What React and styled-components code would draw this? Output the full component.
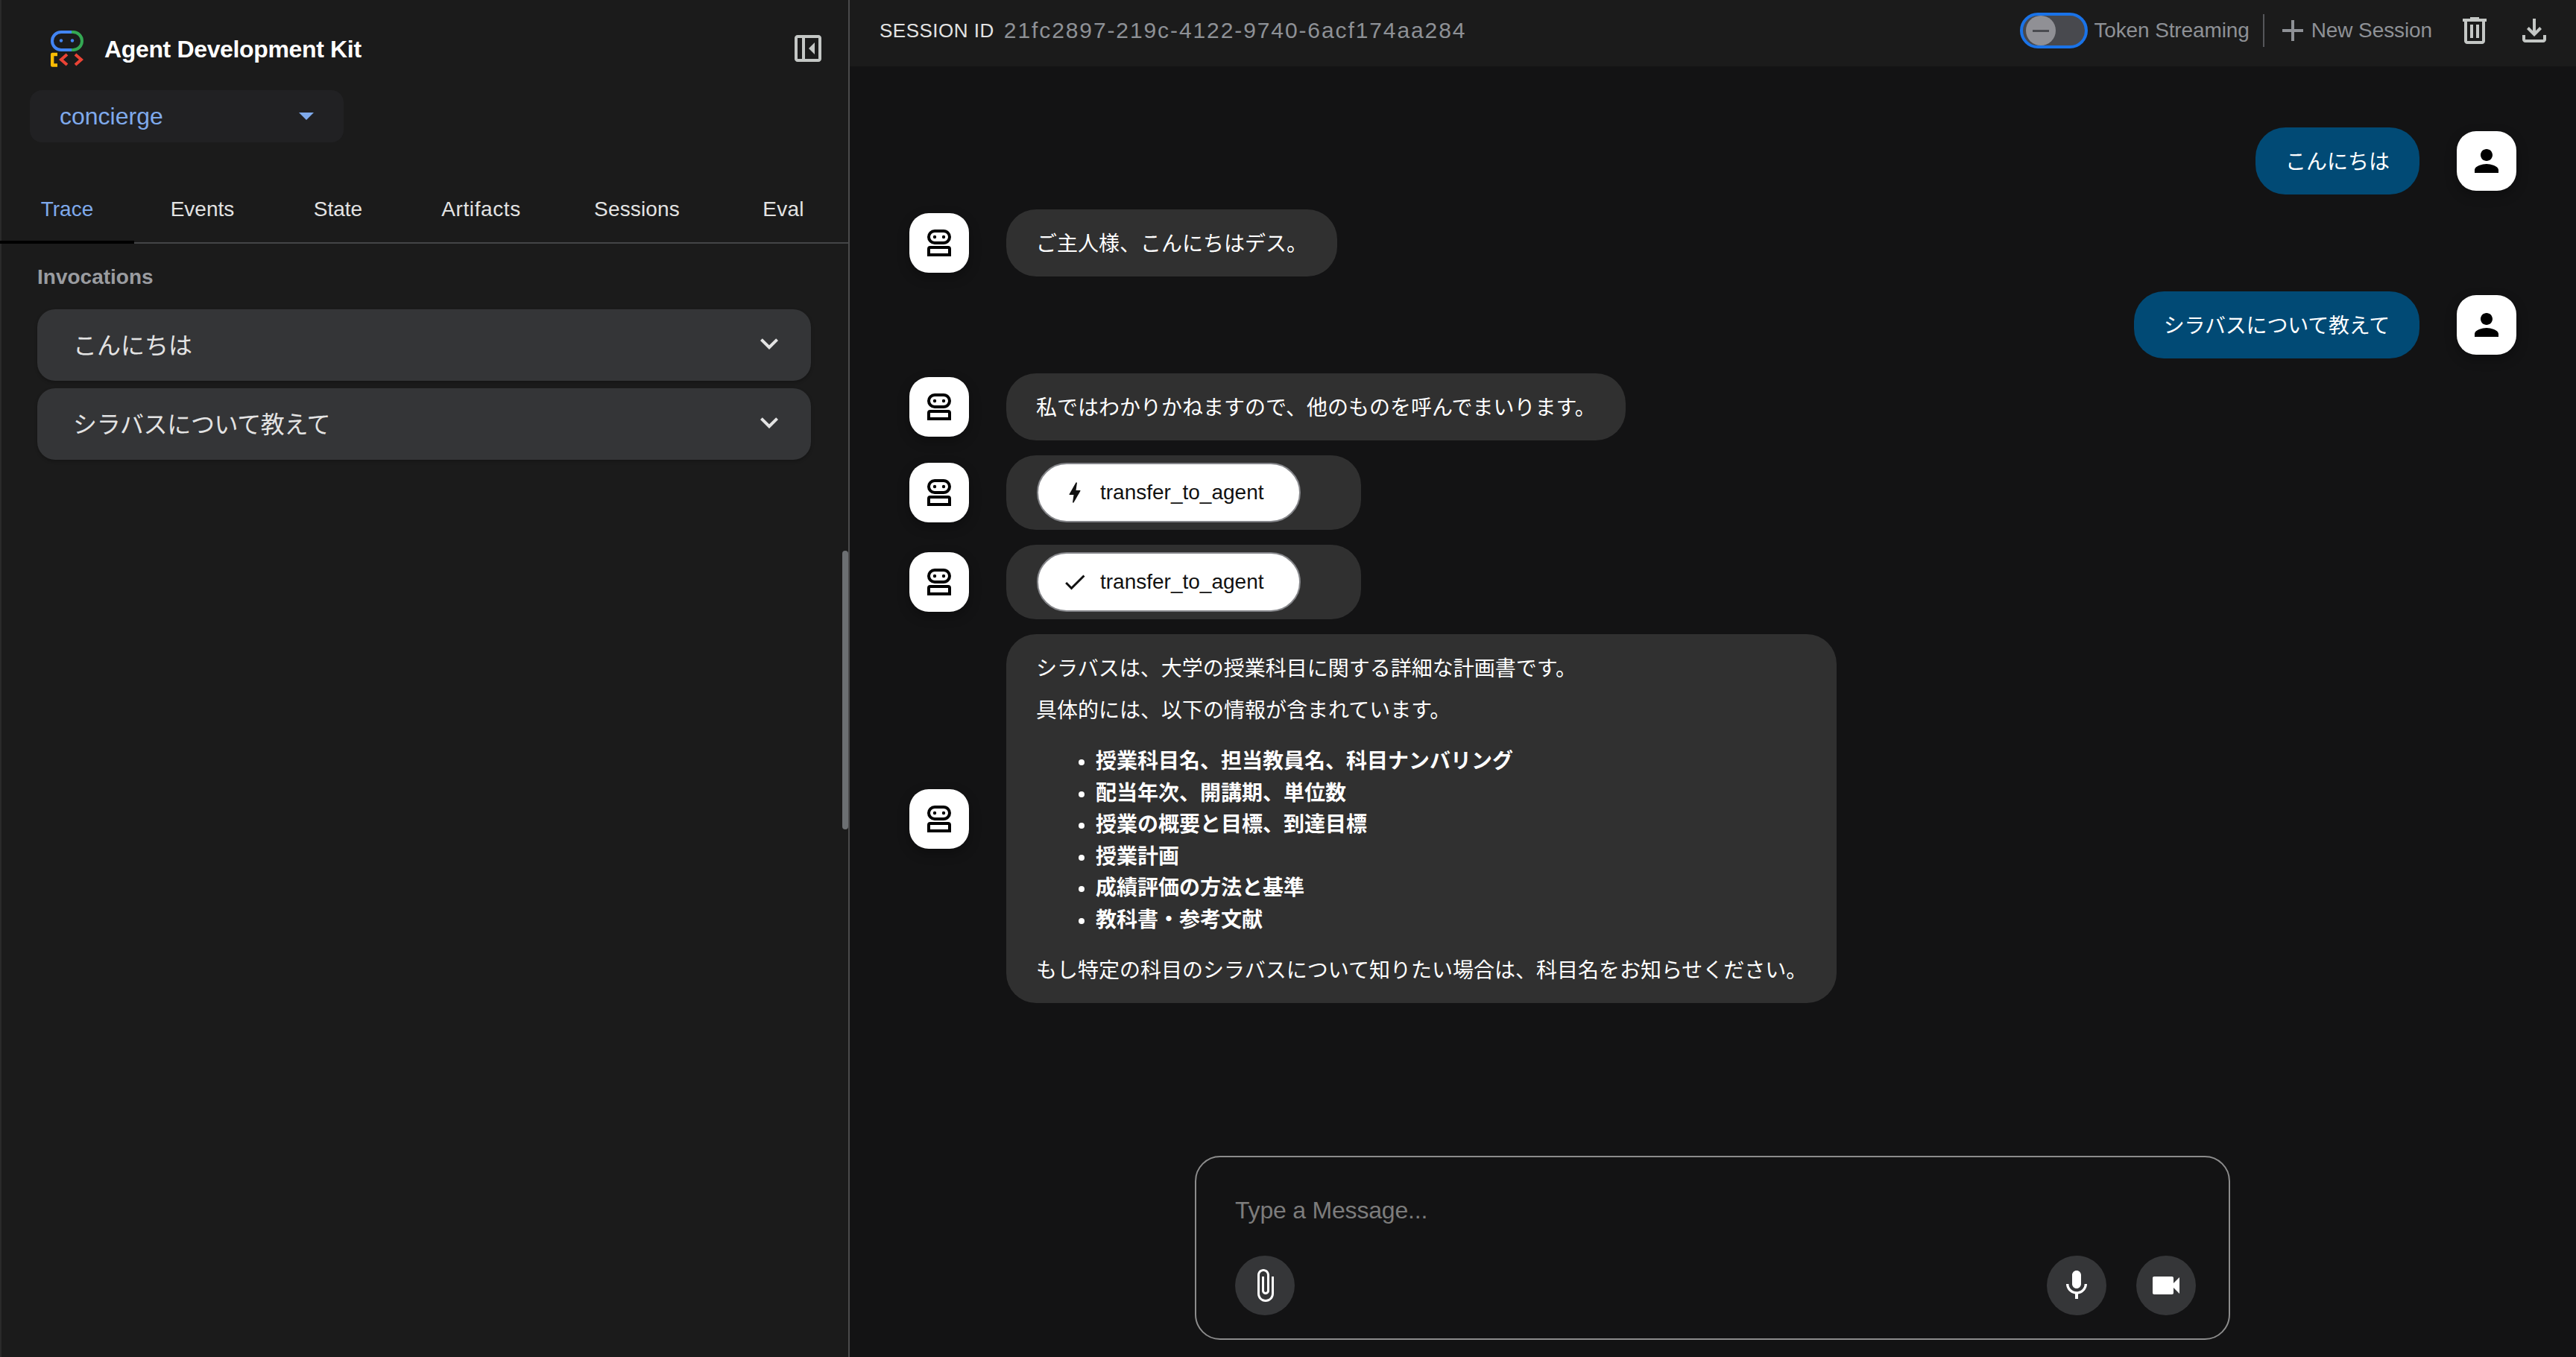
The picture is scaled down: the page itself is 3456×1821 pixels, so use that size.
import React from "react";
import styled, { createGlobalStyle } from "styled-components";

const Global = createGlobalStyle`
  html, body { margin: 0; padding: 0; background: #131314; }
  body { font-family: "Liberation Sans", "Noto Sans CJK JP", sans-serif; }
  #root { width: 3456px; height: 1821px; overflow: hidden; }
  * { box-sizing: border-box; }
`;

const Page = styled.div`
  display: flex;
  width: 3456px;
  height: 1821px;
  background: #131314;
  color: #fff;
`;

/* ---------- side panel ---------- */
const Side = styled.aside`
  position: relative;
  flex: none;
  width: 1140px;
  height: 100%;
  background: #1b1b1b;
  border-left: 2px solid #2a2a2a;
  border-right: 2px solid #4a4a4b;
  display: flex;
  flex-direction: column;
`;
const Brand = styled.div`
  height: 121px;
  padding: 41px 30px 0 66px;
  display: flex;
  align-items: flex-start;
  justify-content: space-between;
`;
const BrandLeft = styled.div`
  display: flex;
  align-items: center;
  gap: 28px;
`;
const Title = styled.div`
  font-size: 32px;
  font-weight: 700;
  line-height: 48px;
  color: #fff;
  letter-spacing: -0.35px;
`;
const PanelIconSlot = styled.div`
  color: #c4c7c5;
  width: 48px;
  height: 48px;
`;
const AgentSelect = styled.div`
  width: 421px;
  height: 70px;
  margin-left: 38px;
  padding: 0 40px;
  border-radius: 16px;
  background: #212123;
  display: flex;
  align-items: center;
  justify-content: space-between;
  font-size: 32px;
  color: #7faaec;
`;
const SelectArrow = styled.span`
  width: 0;
  height: 0;
  border-left: 10px solid transparent;
  border-right: 10px solid transparent;
  border-top: 10px solid #7faaec;
`;
const Tabs = styled.div`
  margin-top: 60px;
  height: 76px;
  display: flex;
  border-bottom: 2px solid #444547;
`;
const Tab = styled.div`
  position: relative;
  flex: none;
  height: 76px;
  width: ${(p) => p.$w}px;
  display: flex;
  align-items: center;
  justify-content: center;
  padding-bottom: 16px;
  font-size: 28px;
  letter-spacing: ${(p) => p.$ls || 0}px;
  color: ${(p) => (p.$active ? "#7faaec" : "#e3e3e3")};
  ${(p) =>
    p.$active &&
    `&::after { content: ""; position: absolute; left: -2px; right: -2px; bottom: 0; height: 4px; background: #000; }`}
`;
const SectionLabel = styled.div`
  margin: 28px 0 0 48px;
  font-size: 28px;
  line-height: 34px;
  font-weight: 700;
  color: #9a9ca0;
`;
const Invocations = styled.div`
  margin: 26px 50px 0 48px;
  display: flex;
  flex-direction: column;
  gap: 10px;
`;
const Invocation = styled.div`
  height: 96px;
  padding: 0 32px 4px 48px;
  border-radius: 24px;
  background: #343537;
  display: flex;
  align-items: center;
  justify-content: space-between;
  font-size: 32px;
  letter-spacing: ${(p) => p.$ls || 0}px;
  color: #e3e3e3;
  box-shadow: 0 2px 4px rgba(0, 0, 0, 0.25);
`;
const ChevronSlot = styled.span`
  width: 48px;
  height: 48px;
  color: #e3e3e3;
`;
const Thumb = styled.div`
  position: absolute;
  right: 0;
  top: 739px;
  width: 8px;
  height: 374px;
  border-radius: 4px;
  background: #6c6f72;
`;

/* ---------- main ---------- */
const Main = styled.main`
  flex: 1;
  min-width: 0;
  display: flex;
  flex-direction: column;
`;
const TopBar = styled.header`
  flex: none;
  height: 89px;
  padding: 0 32px 7px 40px;
  background: #1b1b1b;
  display: flex;
  align-items: center;
  justify-content: space-between;
`;
const SessionWrap = styled.div`
  display: flex;
  align-items: center;
  gap: 13px;
`;
const SessionKey = styled.span`
  font-size: 26px;
  letter-spacing: 0.5px;
  color: #e3e3e3;
`;
const SessionValue = styled.span`
  font-size: 30px;
  letter-spacing: 1.9px;
  color: #8e9196;
`;
const Actions = styled.div`
  display: flex;
  align-items: center;
`;
const Toggle = styled.div`
  position: relative;
  width: 91px;
  height: 48px;
  border-radius: 24px;
  background: #48494e;
  border: 4px solid #1a73e8;
`;
const ToggleThumb = styled.span`
  position: absolute;
  left: 4px;
  top: 0;
  width: 40px;
  height: 40px;
  border-radius: 50%;
  background: #909095;
  display: flex;
  align-items: center;
  justify-content: center;
  &::before {
    content: "";
    width: 22px;
    height: 3px;
    background: #4a4b50;
  }
`;
const ActionLabel = styled.span`
  font-size: 28px;
  color: #8e9196;
  letter-spacing: -0.1px;
`;
const StreamLabel = styled(ActionLabel)`
  margin-left: 8px;
  letter-spacing: -0.12px;
`;
const Rule = styled.span`
  width: 2px;
  height: 44px;
  margin: 0 14px 0 18px;
  background: #55565a;
`;
const PlusIcon = styled.span`
  display: flex;
  margin-right: 1px;
  color: #8e9196;
`;
const TrashSlot = styled.span`
  display: flex;
  margin-left: 33px;
  color: #c4c7c5;
`;
const DownloadSlot = styled.span`
  display: flex;
  margin-left: 32px;
  color: #c4c7c5;
`;

const ChatColumn = styled.div`
  flex: 1;
  min-height: 0;
  padding: 82px 80px 0;
  display: flex;
  flex-direction: column;
`;
const Row = styled.div`
  display: flex;
  align-items: center;
  gap: 50px;
  justify-content: ${(p) => (p.$user ? "flex-end" : "flex-start")};
  margin-top: ${(p) => p.$top ?? 20}px;
`;
const Avatar = styled.div`
  flex: none;
  width: 80px;
  height: 80px;
  border-radius: 26px;
  background: #fff;
  color: #000;
  display: flex;
  align-items: center;
  justify-content: center;
  box-shadow: 0 6px 16px rgba(0, 0, 0, 0.3);
`;
const Bubble = styled.div`
  min-height: 90px;
  padding: 26px 40px 22px;
  border-radius: 40px;
  background: ${(p) => (p.$user ? "#014a75" : "#303030")};
  font-size: 28px;
  line-height: 42px;
  letter-spacing: ${(p) => p.$ls || 0}px;
  color: #fff;
`;
const ToolBubble = styled(Bubble)`
  padding: 10px 81px 10px 41px;
`;
const Chip = styled.div`
  width: 354px;
  height: 80px;
  padding: 0 0 0 31px;
  border-radius: 40px;
  background: #fff;
  border: 2px solid #85868a;
  color: #111;
  display: flex;
  align-items: center;
  gap: 16px;
  font-size: 28px;
`;
const Para = styled.p`
  margin: 0;
  & + & {
    margin-top: 14px;
  }
`;
const BulletList = styled.ul`
  margin: 26px 0 26px;
  padding: 0 0 0 80px;
  font-weight: 700;
  line-height: 42.5px;
`;

const Composer = styled.div`
  flex: none;
  width: 1389px;
  height: 247px;
  margin: 0 0 23px 463px;
  padding: 0 44px 31px 52px;
  border: 2px solid #8c8c8c;
  border-radius: 34px;
  background: #131314;
  display: flex;
  flex-direction: column;
  justify-content: space-between;
`;
const Placeholder = styled.div`
  padding-top: 52px;
  font-size: 32px;
  line-height: 38px;
  letter-spacing: -0.2px;
  color: #7c7c7c;
`;
const ComposerTools = styled.div`
  display: flex;
  align-items: center;
  justify-content: space-between;
`;
const ToolGroup = styled.div`
  display: flex;
  gap: 40px;
`;
const RoundButton = styled.div`
  width: 80px;
  height: 80px;
  border-radius: 50%;
  background: #353638;
  color: #fff;
  display: flex;
  align-items: center;
  justify-content: center;
`;

/* ---------- drawings ---------- */
const Material = ({ d, size = 48 }) => (
  <svg width={size} height={size} viewBox="0 0 24 24" fill="currentColor">
    <path d={d} />
  </svg>
);
const Symbol = ({ d, size = 48 }) => (
  <svg width={size} height={size} viewBox="0 -960 960 960" fill="currentColor">
    <path d={d} />
  </svg>
);

const Logo = () => (
  <svg width="44" height="49" viewBox="0 0 44 49" fill="none" strokeWidth="4">
    <path d="M29 2H14a12 12 0 0 0 0 24H29" stroke="#4285f4" />
    <path d="M28 2h2a12 12 0 0 1 0 24h-2" stroke="#34a853" />
    <circle cx="14" cy="13.5" r="2.2" fill="#4285f4" />
    <circle cx="29" cy="13.5" r="2.2" fill="#4285f4" />
    <path d="M9 32H2.2v14.5H9" stroke="#fbbc04" strokeWidth="4.4" strokeLinejoin="round" />
    <path d="M22 32l-8 7 8 7M33 32l8 7-8 7" stroke="#ea4335" />
  </svg>
);

const BotIcon = () => (
  <svg width="48" height="48" viewBox="0 0 48 48">
    <rect x="10" y="8" width="28" height="16" rx="8" fill="none" stroke="#000" strokeWidth="4" />
    <circle cx="18" cy="16" r="2.2" fill="#000" />
    <circle cx="30" cy="16" r="2.2" fill="#000" />
    <path
      fillRule="evenodd"
      d="M8 42V32q0-4 4-4h24q4 0 4 4v10zM12 32v6h24v-6z"
      fill="#000"
    />
  </svg>
);

const PERSON =
  "M12 12c2.21 0 4-1.79 4-4s-1.79-4-4-4-4 1.79-4 4 1.79 4 4 4zm0 2c-2.67 0-8 1.34-8 4v2h16v-2c0-2.66-5.33-4-8-4z";
const CHEVRON = "M7.41 8.59 12 13.17l4.59-4.58L18 10l-6 6-6-6z";
const BOLT =
  "M11 21h-1l1-7H7.5c-.58 0-.57-.32-.38-.66.19-.34.05-.08.07-.12C8.48 10.94 10.42 7.54 13 3h1l-1 7h3.5c.49 0 .56.33.47.51l-.07.15C12.96 17.55 11 21 11 21z";
const CHECK = "M9 16.17 4.83 12l-1.42 1.41L9 19 21 7l-1.41-1.41z";
const ATTACH =
  "M16.5 6v11.5c0 2.21-1.79 4-4 4s-4-1.79-4-4V5c0-1.38 1.12-2.5 2.5-2.5s2.5 1.12 2.5 2.5v10.5c0 .55-.45 1-1 1s-1-.45-1-1V6H10v9.5c0 1.38 1.12 2.5 2.5 2.5s2.5-1.12 2.5-2.5V5c0-2.21-1.79-4-4-4S7 2.79 7 5v12.5c0 3.04 2.46 5.5 5.5 5.5s5.5-2.46 5.5-5.5V6h-1.5z";
const MIC =
  "M12 14c1.66 0 2.99-1.34 2.99-3L15 5c0-1.66-1.34-3-3-3S9 3.34 9 5v6c0 1.66 1.34 3 3 3zm5.3-3c0 3-2.54 5.1-5.3 5.1S6.7 14 6.7 11H5c0 3.41 2.72 6.23 6 6.72V21h2v-3.28c3.28-.48 6-3.3 6-6.72h-1.7z";
const VIDEO =
  "M17 10.5V7c0-.55-.45-1-1-1H4c-.55 0-1 .45-1 1v10c0 .55.45 1 1 1h12c.55 0 1-.45 1-1v-3.5l4 4v-11l-4 4z";
const PLUS = "M19 13h-6v6h-2v-6H5v-2h6V5h2v6h6v2z";
const PANEL =
  "M660-320v-320L500-480l160 160ZM200-120q-33 0-56.5-23.5T120-200v-560q0-33 23.5-56.5T200-840h560q33 0 56.5 23.5T840-760v560q0 33-23.5 56.5T760-120H200Zm120-80v-560H200v560h120Zm80 0h360v-560H400v560Zm-80 0H200h120Z";
const TRASH =
  "M280-120q-33 0-56.5-23.5T200-200v-520h-40v-80h200v-40h240v40h200v80h-40v520q0 33-23.5 56.5T680-120H280Zm400-600H280v520h400v-520ZM360-280h80v-360h-80v360Zm160 0h80v-360h-80v360ZM280-720v520-520Z";
const DOWNLOAD =
  "M480-320 280-520l56-58 104 104v-326h80v326l104-104 56 58-200 200ZM240-160q-33 0-56.5-23.5T160-240v-120h80v120h480v-120h80v120q0 33-23.5 56.5T720-160H240Z";

const TABS = [
  ["Trace", 176, 0],
  ["Events", 187, 0],
  ["State", 177, 0],
  ["Artifacts", 207, 0.6],
  ["Sessions", 211, 0.15],
  ["Eval", 182, 0.3],
];

const LIST = [
  "授業科目名、担当教員名、科目ナンバリング",
  "配当年次、開講期、単位数",
  "授業の概要と目標、到達目標",
  "授業計画",
  "成績評価の方法と基準",
  "教科書・参考文献",
];

const UserRow = ({ text, top, ls }) => (
  <Row $user $top={top}>
    <Bubble $user $ls={ls}>
      {text}
    </Bubble>
    <Avatar>
      <Material d={PERSON} />
    </Avatar>
  </Row>
);

const BotRow = ({ children, top }) => (
  <Row $top={top}>
    <Avatar>
      <BotIcon />
    </Avatar>
    {children}
  </Row>
);

const ToolRow = ({ icon, top }) => (
  <BotRow top={top}>
    <ToolBubble>
      <Chip>
        <Material d={icon} size={36} />
        transfer_to_agent
      </Chip>
    </ToolBubble>
  </BotRow>
);

export default function App() {
  return (
    <Page>
      <Global />
      <Side>
        <Brand>
          <BrandLeft>
            <Logo />
            <Title>Agent Development Kit</Title>
          </BrandLeft>
          <PanelIconSlot>
            <Symbol d={PANEL} />
          </PanelIconSlot>
        </Brand>
        <AgentSelect>
          concierge
          <SelectArrow />
        </AgentSelect>
        <Tabs>
          {TABS.map(([label, w, ls], i) => (
            <Tab key={label} $w={w} $ls={ls} $active={i === 0}>
              {label}
            </Tab>
          ))}
        </Tabs>
        <SectionLabel>Invocations</SectionLabel>
        <Invocations>
          <Invocation>
            こんにちは
            <ChevronSlot>
              <Material d={CHEVRON} />
            </ChevronSlot>
          </Invocation>
          <Invocation $ls={-0.36}>
            シラバスについて教えて
            <ChevronSlot>
              <Material d={CHEVRON} />
            </ChevronSlot>
          </Invocation>
        </Invocations>
        <Thumb />
      </Side>
      <Main>
        <TopBar>
          <SessionWrap>
            <SessionKey>SESSION ID</SessionKey>
            <SessionValue>21fc2897-219c-4122-9740-6acf174aa284</SessionValue>
          </SessionWrap>
          <Actions>
            <Toggle>
              <ToggleThumb />
            </Toggle>
            <StreamLabel>Token Streaming</StreamLabel>
            <Rule />
            <PlusIcon>
              <Material d={PLUS} size={48} />
            </PlusIcon>
            <ActionLabel>New Session</ActionLabel>
            <TrashSlot>
              <Symbol d={TRASH} />
            </TrashSlot>
            <DownloadSlot>
              <Symbol d={DOWNLOAD} />
            </DownloadSlot>
          </Actions>
        </TopBar>
        <ChatColumn>
          <UserRow text="こんにちは" top={0} />
          <BotRow top={20}>
            <Bubble>ご主人様、こんにちはデス。</Bubble>
          </BotRow>
          <UserRow text="シラバスについて教えて" top={20} ls={-0.2} />
          <BotRow top={20}>
            <Bubble>私ではわかりかねますので、他のものを呼んでまいります。</Bubble>
          </BotRow>
          <ToolRow icon={BOLT} top={20} />
          <ToolRow icon={CHECK} top={20} />
          <BotRow top={20}>
            <Bubble>
              <Para>シラバスは、大学の授業科目に関する詳細な計画書です。</Para>
              <Para>具体的には、以下の情報が含まれています。</Para>
              <BulletList>
                {LIST.map((t) => (
                  <li key={t}>{t}</li>
                ))}
              </BulletList>
              <Para>もし特定の科目のシラバスについて知りたい場合は、科目名をお知らせください。</Para>
            </Bubble>
          </BotRow>
        </ChatColumn>
        <Composer>
          <Placeholder>Type a Message...</Placeholder>
          <ComposerTools>
            <RoundButton>
              <Material d={ATTACH} />
            </RoundButton>
            <ToolGroup>
              <RoundButton>
                <Material d={MIC} />
              </RoundButton>
              <RoundButton>
                <Material d={VIDEO} />
              </RoundButton>
            </ToolGroup>
          </ComposerTools>
        </Composer>
      </Main>
    </Page>
  );
}
